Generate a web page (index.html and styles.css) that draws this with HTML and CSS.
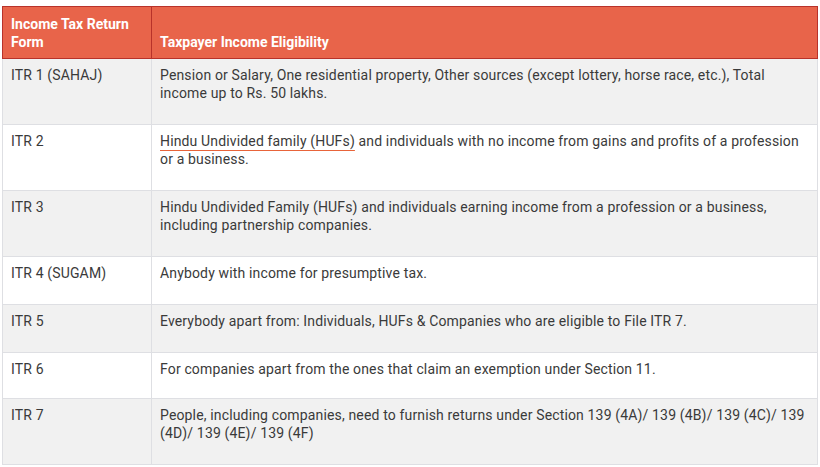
FILE: index.html
```html
<!DOCTYPE html>
<html>
<head>
<meta charset="utf-8">
<link rel="stylesheet" href="styles.css">
</head>
<body>
<table class="itr-table">
  <thead>
    <tr>
      <th class="col-form">Income Tax Return<br>Form</th>
      <th class="col-elig">Taxpayer Income Eligibility</th>
    </tr>
  </thead>
  <tbody>
    <tr class="row alt">
      <td>ITR 1 (SAHAJ)</td>
      <td>Pension or Salary, One residential property, Other sources (except lottery, horse race, etc.), Total income up to Rs. 50 lakhs.</td>
    </tr>
    <tr class="row">
      <td>ITR 2</td>
      <td><span class="link">Hindu Undivided family (HUFs)</span> and individuals with no income from gains and profits of a profession or a business.</td>
    </tr>
    <tr class="row alt">
      <td>ITR 3</td>
      <td>Hindu Undivided Family (HUFs) and individuals earning income from a profession or a business, including partnership companies.</td>
    </tr>
    <tr class="row">
      <td>ITR 4 (SUGAM)</td>
      <td>Anybody with income for presumptive tax.</td>
    </tr>
    <tr class="row alt">
      <td>ITR 5</td>
      <td>Everybody apart from: Individuals, HUFs &amp; Companies who are eligible to File ITR 7.</td>
    </tr>
    <tr class="row short">
      <td>ITR 6</td>
      <td>For companies apart from the ones that claim an exemption under Section 11.</td>
    </tr>
    <tr class="row alt">
      <td>ITR 7</td>
      <td>People, including companies, need to furnish returns under Section 139 (4A)/ 139 (4B)/ 139 (4C)/ 139 (4D)/ 139 (4E)/ 139 (4F)</td>
    </tr>
  </tbody>
</table>
</body>
</html>
```

FILE: styles.css
```css
html, body {
  margin: 0;
  padding: 0;
  background: #ffffff;
}

body {
  padding: 6px 2px 0 2px;
  font-family: Roboto, "Liberation Sans", Arial, sans-serif;
  font-size: 14px;
  line-height: 18px;
  color: #3a3a3a;
}

.itr-table {
  width: 816px;
  border-collapse: collapse;
  table-layout: fixed;
}

.itr-table th {
  background: #e8644a;
  color: #ffffff;
  font-weight: 700;
  text-align: left;
  vertical-align: bottom;
  border: 1px solid #b8322a;
  padding: 8px 8px 7px 8px;
}

.col-form {
  width: 132px;
}

.itr-table td {
  border: 1px solid #dedfe3;
  vertical-align: top;
  padding: 7px 8px 22px 8px;
  background: #ffffff;
  letter-spacing: 0.15px;
}

.itr-table tr.alt td {
  background: #f1f1f1;
}

.itr-table tr.short td {
  padding-bottom: 20px;
}

.link {
  text-decoration: underline;
  text-decoration-color: #e8643a;
  text-decoration-thickness: 1px;
  text-underline-offset: 4px;
}
```
